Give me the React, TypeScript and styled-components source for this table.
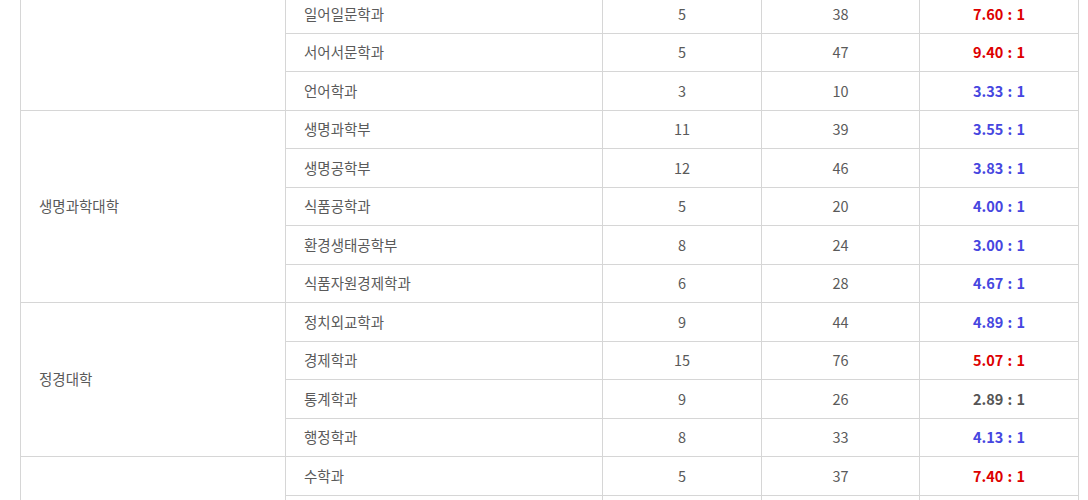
import React from "react";
import styled, { createGlobalStyle } from "styled-components";

const GlobalStyle = createGlobalStyle`
  html, body {
    margin: 0;
    padding: 0;
    background: #ffffff;
    overflow: hidden;
  }
`;

const Wrapper = styled.div`
  padding: 0 10px 0 20px;
  font-family: "Noto Sans CJK KR", "Noto Sans", sans-serif;
  font-size: 14.5px;
  color: #5a5a5a;
`;

const Table = styled.table`
  width: 1058px;
  margin-top: -6px;
  border-collapse: collapse;
  table-layout: fixed;
`;

const Col = styled.col<{ $w: number }>`
  width: ${(p) => p.$w}px;
`;

const Cell = styled.td<{ $align?: "left" | "center" }>`
  height: 37.5px;
  padding: 0 18px;
  border: 1px solid #d6d6d6;
  text-align: ${(p) => p.$align ?? "center"};
  vertical-align: middle;
  line-height: 1;
  white-space: nowrap;
`;

const Ratio = styled.span<{ $tone: "red" | "blue" | "gray" }>`
  font-weight: 700;
  word-spacing: 1px;
  color: ${(p) =>
    p.$tone === "red" ? "#dd0000" : p.$tone === "blue" ? "#4646e0" : "#555555"};
`;

interface Dept {
  name: string;
  quota: number;
  applicants: number;
}

interface College {
  name: string;
  depts: Dept[];
}

// 위쪽 인문대학 라벨은 화면 밖이라 비워둠
const colleges: College[] = [
  {
    name: "",
    depts: [
      { name: "일어일문학과", quota: 5, applicants: 38 },
      { name: "서어서문학과", quota: 5, applicants: 47 },
      { name: "언어학과", quota: 3, applicants: 10 },
    ],
  },
  {
    name: "생명과학대학",
    depts: [
      { name: "생명과학부", quota: 11, applicants: 39 },
      { name: "생명공학부", quota: 12, applicants: 46 },
      { name: "식품공학과", quota: 5, applicants: 20 },
      { name: "환경생태공학부", quota: 8, applicants: 24 },
      { name: "식품자원경제학과", quota: 6, applicants: 28 },
    ],
  },
  {
    name: "정경대학",
    depts: [
      { name: "정치외교학과", quota: 9, applicants: 44 },
      { name: "경제학과", quota: 15, applicants: 76 },
      { name: "통계학과", quota: 9, applicants: 26 },
      { name: "행정학과", quota: 8, applicants: 33 },
    ],
  },
  {
    name: "",
    depts: [
      { name: "수학과", quota: 5, applicants: 37 },
      { name: "", quota: 0, applicants: 0 },
    ],
  },
];

const widths = [265, 317, 159, 158, 159];

// 경쟁률 색상: 5 이상 빨강, 3 이상 파랑, 나머지 회색
function tone(r: number): "red" | "blue" | "gray" {
  if (r >= 5) return "red";
  if (r >= 3) return "blue";
  return "gray";
}

function App() {
  return (
    <Wrapper>
      <GlobalStyle />
      <Table>
        <colgroup>
          {widths.map((w, i) => (
            <Col key={i} $w={w} />
          ))}
        </colgroup>
        <tbody>
          {colleges.map((c, ci) =>
            c.depts.map((d, di) => {
              const r = d.quota ? d.applicants / d.quota : 0;
              return (
                <tr key={`${ci}-${di}`}>
                  {di === 0 && (
                    <Cell $align="left" rowSpan={c.depts.length}>
                      {c.name}
                    </Cell>
                  )}
                  <Cell $align="left">{d.name}</Cell>
                  <Cell>{d.quota || ""}</Cell>
                  <Cell>{d.applicants || ""}</Cell>
                  <Cell>
                    {d.quota > 0 && (
                      <Ratio $tone={tone(r)}>{r.toFixed(2)} : 1</Ratio>
                    )}
                  </Cell>
                </tr>
              );
            })
          )}
        </tbody>
      </Table>
    </Wrapper>
  );
}

export default App;
